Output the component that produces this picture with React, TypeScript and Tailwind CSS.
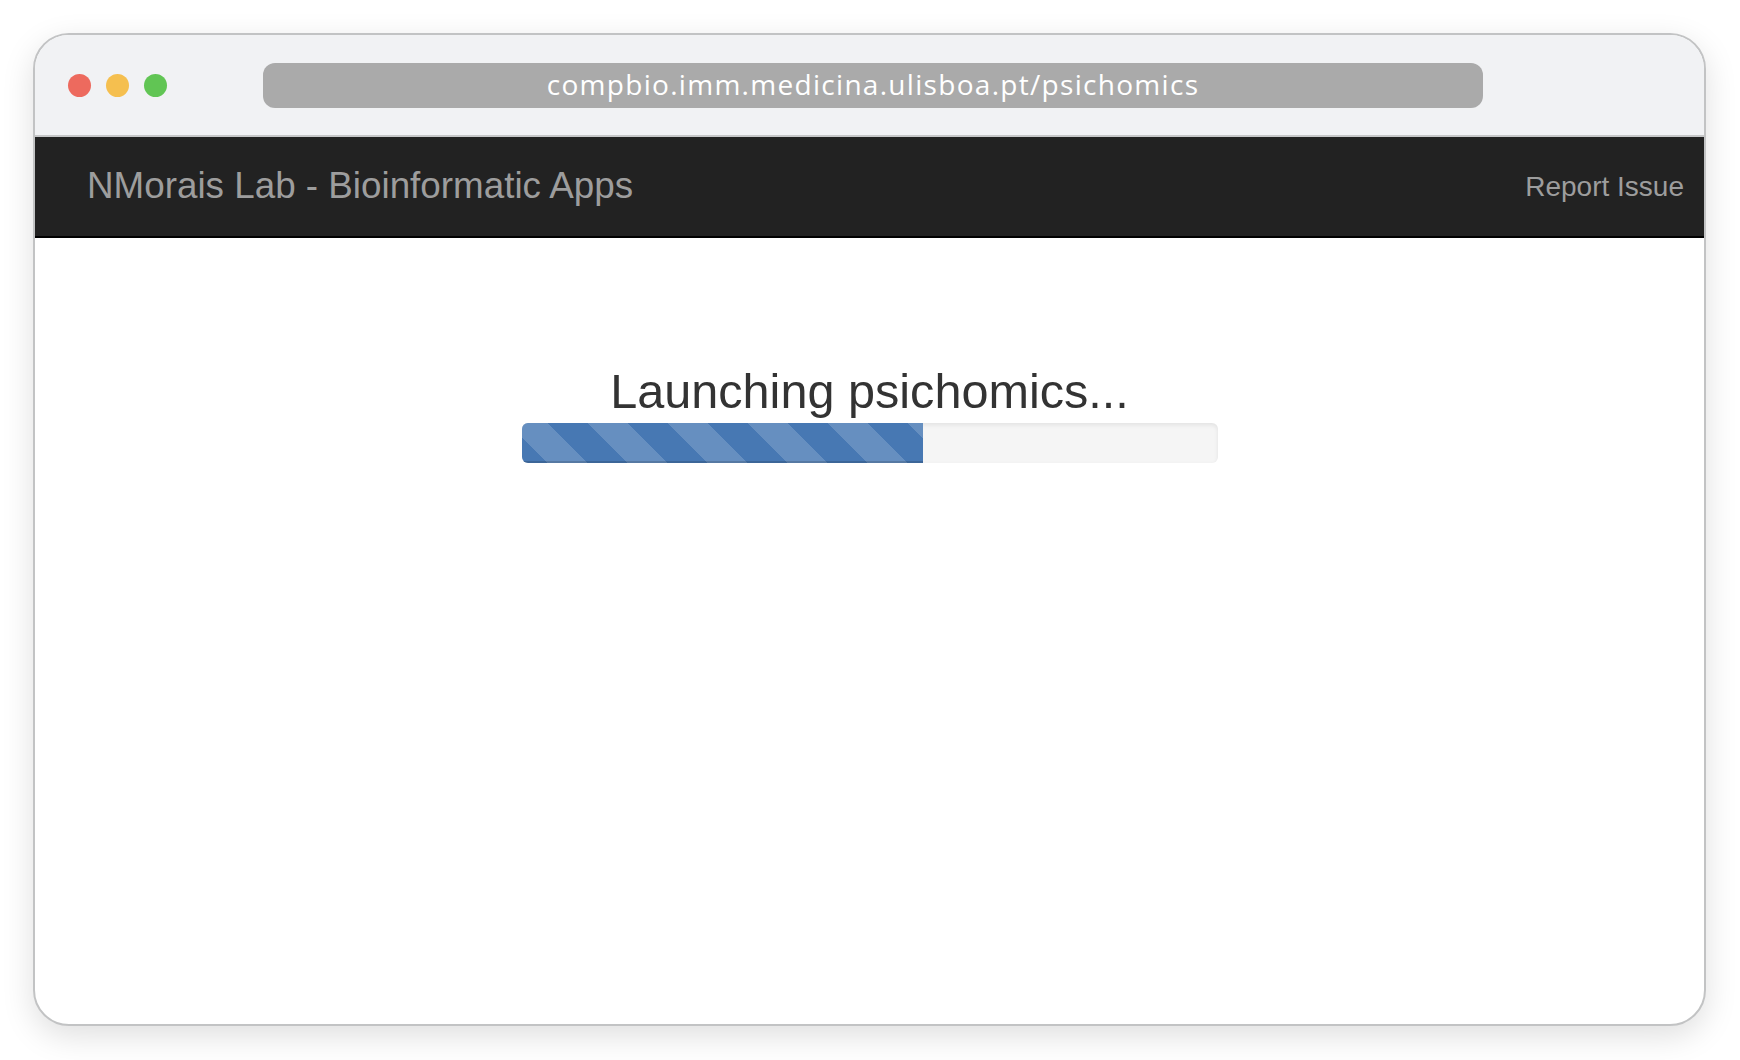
import React from "react";

export default function App() {
  return (
    <div className="w-[1740px] h-[1060px] bg-white pt-[33px] pl-[33px] pr-[34px] pb-[34px]">
      <div className="h-full rounded-[36px] border-2 border-[#c2c3c4] bg-white shadow-[0_10px_32px_rgba(0,0,0,0.13)] overflow-hidden flex flex-col">
        {/* title bar */}
        <div className="h-[102px] shrink-0 bg-[#f1f2f4] border-b-2 border-[#c6c7c8] flex items-center pl-[33px]">
          <div className="flex items-center gap-[15px]">
            <span className="w-[23px] h-[23px] rounded-full bg-[#ed6a5e]" />
            <span className="w-[23px] h-[23px] rounded-full bg-[#f5bf4f]" />
            <span className="w-[23px] h-[23px] rounded-full bg-[#61c554]" />
          </div>
          <div className="ml-[96px] w-[1220px] h-[45px] rounded-[12px] bg-[#aaaaaa] flex items-center justify-center text-white text-[28px] tracking-[1.3px] font-['Open_Sans',sans-serif] leading-none pb-[2px]">
            compbio.imm.medicina.ulisboa.pt/psichomics
          </div>
        </div>
        {/* navbar */}
        <div className="h-[101px] shrink-0 bg-[#222222] border-b-2 border-black flex items-center justify-between pl-[52px] pr-[20px] font-['Liberation_Sans',Arial,sans-serif] text-[#9d9d9d]">
          <span className="text-[36.8px] leading-none">NMorais Lab - Bioinformatic Apps</span>
          <span className="text-[28px] leading-none">Report Issue</span>
        </div>
        {/* content */}
        <div className="flex-1 flex flex-col items-center pt-[129px] font-['Liberation_Sans',Arial,sans-serif]">
          <h2 className="text-[48.6px] leading-[48px] text-[#333333]">Launching psichomics...</h2>
          <div className="mt-[8px] w-[696px] h-[40px] rounded-[6px] bg-[#f5f5f5] shadow-[inset_0_2px_4px_rgba(0,0,0,0.08)] overflow-hidden flex">
            <div
              className="h-full bg-[#4778b3] bg-[linear-gradient(45deg,rgba(255,255,255,.17)_25%,transparent_25%,transparent_50%,rgba(255,255,255,.17)_50%,rgba(255,255,255,.17)_75%,transparent_75%,transparent)] bg-[length:80px_80px] bg-[position:-14px_0] shadow-[inset_0_-2px_0_rgba(0,0,0,0.15)]"
              style={{ width: "401px" }}
            />
          </div>
        </div>
      </div>
    </div>
  );
}
